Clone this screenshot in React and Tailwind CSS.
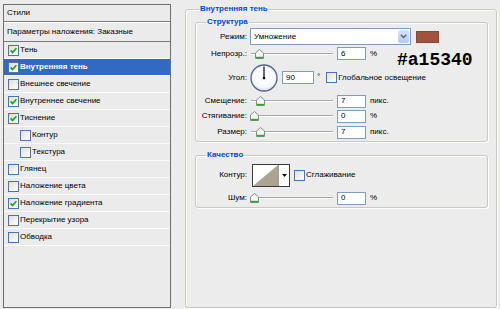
import React from "react";

const items = [
  { label: "Тень", checked: true },
  { label: "Внутренняя тень", checked: true, selected: true },
  { label: "Внешнее свечение" },
  { label: "Внутреннее свечение", checked: true },
  { label: "Тиснение", checked: true },
  { label: "Контур", indent: true },
  { label: "Текстура", indent: true },
  { label: "Глянец" },
  { label: "Наложение цвета" },
  { label: "Наложение градиента", checked: true },
  { label: "Перекрытие узора" },
  { label: "Обводка" },
];

function Check({ checked }) {
  return (
    <span className="flex h-[11px] w-[11px] shrink-0 items-center justify-center border border-[#4f73a3] bg-gradient-to-br from-[#dedfd8] to-white">
      {checked && (
        <svg width="7" height="7" viewBox="0 0 7 7">
          <path d="M0.6 3.4 L2.6 5.5 L6.4 1.2" stroke="#1f9e1f" strokeWidth="1.7" fill="none" />
        </svg>
      )}
    </span>
  );
}

function Slider({ pos }) {
  return (
    <div className="relative h-[10px] w-[83px] shrink-0">
      <div className="absolute left-[1px] right-0 top-[4px] h-[2px] border-t border-[#a7a7a7] bg-white" />
      <svg className="absolute top-0" style={{ left: pos }} width="9" height="10" viewBox="0 0 9 10">
        <polygon points="0.5,4 4.5,0.5 8.5,4 8.5,9.5 0.5,9.5" fill="#f5f5f1" stroke="#7d8f86" strokeWidth="1" />
        <line x1="1" y1="8.6" x2="8" y2="8.6" stroke="#22b022" strokeWidth="1.6" />
      </svg>
    </div>
  );
}

function Field({ value, w = "w-[29px]" }) {
  return (
    <div className={`flex h-[13px] ${w} shrink-0 items-center border border-[#7f9db9] bg-white pl-[3px] text-[8px] leading-none`}>
      {value}
    </div>
  );
}

function Label({ children }) {
  return <div className="w-[51px] shrink-0 text-right">{children}</div>;
}

export default function App() {
  return (
    <div className="flex h-[309px] w-[500px] items-start overflow-hidden bg-[#ececec] pl-[3px] pt-[4px] font-['Liberation_Sans',Arial,sans-serif] text-[8px] leading-[10px] text-black">
      {/* Left styles list */}
      <div className="flex h-[304px] w-[168px] shrink-0 flex-col border border-[#6e6e6e] bg-[#ebebeb]">
        <div className="flex h-[17px] shrink-0 items-center border-b border-[#7a7a7a] pl-[3px]">Стили</div>
        <div className="flex h-[20px] shrink-0 items-center border-b border-t border-b-[#7a7a7a] border-t-white pl-[3px]">
          Параметры наложения: Заказные
        </div>
        {items.map((it) => (
          <div
            key={it.label}
            className={`flex h-[17px] shrink-0 items-center gap-[1px] border-b border-[#fbfbfb] ${
              it.indent ? "pl-[16px]" : "pl-[4px]"
            } ${it.selected ? "bg-[#316ac5] font-bold text-white" : ""}`}
          >
            <Check checked={it.checked} />
            <span>{it.label}</span>
          </div>
        ))}
      </div>

      {/* Right panel */}
      <fieldset className="ml-[14px] h-[304px] w-[312px] shrink-0 rounded-[3px] border border-[#c9c9be] pl-[9px] pr-[8px] pt-[3px] shadow-[1px_1px_0_#ffffff,inset_1px_1px_0_#ffffff]">
        <legend className="ml-[4px] px-[1px] font-bold leading-[10px] text-[#0046d5]">Внутренняя тень</legend>

        {/* Структура */}
        <fieldset className="relative rounded-[3px] border border-[#c9c9be] pb-[1px] shadow-[1px_1px_0_#ffffff,inset_1px_1px_0_#ffffff]">
          <legend className="ml-[10px] px-[1px] font-bold leading-[10px] text-[#0046d5]">Структура</legend>

          <div className="flex h-[19px] items-center">
            <Label>Режим:</Label>
            <div className="ml-[3px] flex h-[17px] w-[161px] items-stretch border border-[#7f9db9] bg-white">
              <div className="flex flex-1 items-center pl-[3px]">Умножение</div>
              <div className="m-[1px] flex w-[11px] items-center justify-center rounded-[2px] bg-gradient-to-b from-[#d9e4fd] to-[#b5c9f7]">
                <svg width="7" height="5" viewBox="0 0 7 5">
                  <path d="M0.8 0.8 L3.5 3.6 L6.2 0.8" stroke="#4d6185" strokeWidth="1.4" fill="none" />
                </svg>
              </div>
            </div>
            <div className="ml-[5px] h-[12px] w-[23px] border border-[#8a4838] bg-[#a15340]" />
          </div>

          <div className="flex h-[15px] items-center">
            <Label>Непрозр.:</Label>
            <div className="ml-[3px]">
              <Slider pos={5} />
            </div>
            <div className="ml-[4px]">
              <Field value="6" />
            </div>
            <span className="ml-[4px]">%</span>
          </div>

          <div className="flex h-[33px] items-center">
            <Label>Угол:</Label>
            <svg className="ml-[3px] shrink-0" width="28" height="28" viewBox="0 0 28 28">
              <defs>
                <radialGradient id="dialg" cx="50%" cy="45%" r="55%">
                  <stop offset="0%" stopColor="#ffffff" />
                  <stop offset="75%" stopColor="#f7f8fa" />
                  <stop offset="100%" stopColor="#d5dbe6" />
                </radialGradient>
              </defs>
              <circle cx="14" cy="14" r="13" fill="url(#dialg)" stroke="#50648f" strokeWidth="1.3" />
              <line x1="14" y1="14" x2="14" y2="2.5" stroke="#000" strokeWidth="1.2" />
              <circle cx="14" cy="14" r="1.3" fill="#000" />
            </svg>
            <div className="ml-[4px]">
              <Field value="90" w="w-[32px]" />
            </div>
            <span className="ml-[3px] self-start pt-[11px]">°</span>
            <div className="ml-[6px] flex items-center gap-[1px]">
              <Check />
              <span>Глобальное освещение</span>
            </div>
          </div>

          <div className="flex h-[14px] items-center">
            <Label>Смещение:</Label>
            <div className="ml-[3px]">
              <Slider pos={6} />
            </div>
            <div className="ml-[4px]">
              <Field value="7" />
            </div>
            <span className="ml-[4px]">пикс.</span>
          </div>

          <div className="flex h-[16px] items-center">
            <Label>Стягивание:</Label>
            <div className="ml-[3px]">
              <Slider pos={0} />
            </div>
            <div className="ml-[4px]">
              <Field value="0" />
            </div>
            <span className="ml-[4px]">%</span>
          </div>

          <div className="flex h-[16px] items-center">
            <Label>Размер:</Label>
            <div className="ml-[3px]">
              <Slider pos={6} />
            </div>
            <div className="ml-[4px]">
              <Field value="7" />
            </div>
            <span className="ml-[4px]">пикс.</span>
          </div>

          {/* annotation overlay */}
          <div className="absolute left-[201px] top-[24px] font-['Liberation_Mono',monospace] text-[18px] font-bold leading-[18px] text-black">
            #a15340
          </div>
        </fieldset>

        {/* Качество */}
        <fieldset className="mt-[8px] rounded-[3px] border border-[#c9c9be] pb-[1px] shadow-[1px_1px_0_#ffffff,inset_1px_1px_0_#ffffff]">
          <legend className="ml-[10px] px-[1px] font-bold leading-[10px] text-[#0046d5]">Качество</legend>

          <div className="flex h-[30px] items-center">
            <Label>Контур:</Label>
            <div className="ml-[5px] flex h-[23px] w-[38px] shrink-0 border border-[#3a3a3a] bg-white">
              <svg width="25" height="21" viewBox="0 0 25 21" className="shrink-0">
                <rect x="0" y="0" width="25" height="21" fill="#ffffff" />
                <polygon points="0,21 25,0 25,21" fill="#aca491" />
              </svg>
              <div className="flex flex-1 items-center justify-center border-l border-[#9a9a9a]">
                <svg width="5" height="3" viewBox="0 0 5 3">
                  <polygon points="0,0 5,0 2.5,3" fill="#000" />
                </svg>
              </div>
            </div>
            <div className="ml-[4px] flex items-center gap-[1px]">
              <Check />
              <span>Сглаживание</span>
            </div>
          </div>

          <div className="flex h-[16px] items-center">
            <Label>Шум:</Label>
            <div className="ml-[3px]">
              <Slider pos={0} />
            </div>
            <div className="ml-[4px]">
              <Field value="0" />
            </div>
            <span className="ml-[4px]">%</span>
          </div>
        </fieldset>
      </fieldset>
    </div>
  );
}
